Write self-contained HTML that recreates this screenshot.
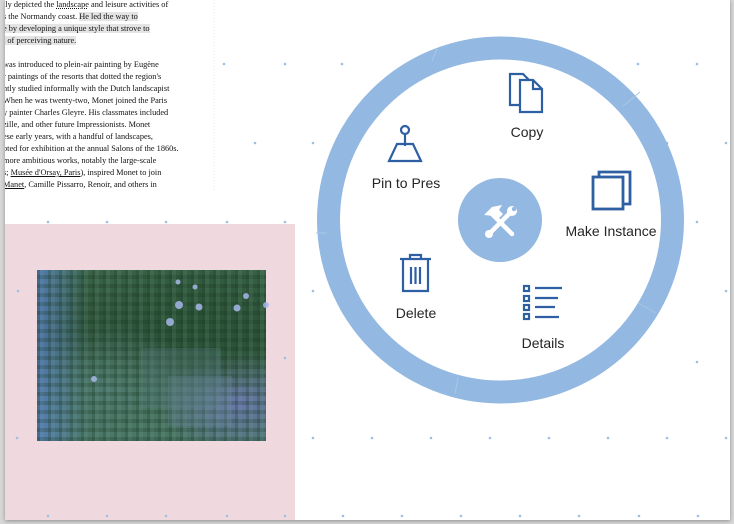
<!DOCTYPE html>
<html><head><meta charset="utf-8"><style>
html,body{margin:0;padding:0;width:734px;height:524px;overflow:hidden;background:#d8d8d8;}
#page{position:absolute;left:5px;top:0;width:725px;height:520px;background:#fff;box-shadow:0 1px 4px rgba(0,0,0,.35);}
#txt{position:absolute;left:5px;top:0;width:200px;font-family:"Liberation Serif",serif;font-size:8.3px;color:#111;line-height:12px;white-space:nowrap;overflow:hidden;}
#txt div{height:12px;margin-left:-2px}
.hl{background:#e4e4e4}
#pink{position:absolute;left:5px;top:224px;width:290px;height:296px;background:#efd9de;}
#paint{position:absolute;left:37px;top:270px;width:229px;height:171px;overflow:hidden;
background:
repeating-linear-gradient(90deg,rgba(30,60,40,.25) 0 3px,rgba(120,160,140,.15) 3px 7px,rgba(0,0,0,0) 7px 11px),
repeating-linear-gradient(0deg,rgba(20,50,30,.25) 0 4px,rgba(0,0,0,0) 4px 9px),
linear-gradient(90deg,rgba(90,130,210,.75) 0,rgba(90,130,200,.45) 10%,rgba(0,0,0,0) 22%),
radial-gradient(ellipse at 30% 70%,#4e7a70,transparent 40%),
radial-gradient(ellipse at 70% 30%,#2a5236,transparent 45%),
radial-gradient(ellipse at 88% 78%,#6a78b0,transparent 28%),
linear-gradient(#3a6448,#2d5238 40%,#40694c 70%,#4a7868);}
svg{position:absolute;left:0;top:0}
.lbl{font-family:"Liberation Sans",sans-serif;font-size:14px;fill:#252525;text-anchor:middle}
</style></head><body>
<div id="page"></div>
<div id="txt">
<div style="margin-top:-1px">tly depicted the <u style="text-decoration-style:dotted">landscape</u> and leisure activities of</div>
<div>s the Normandy coast. <span class="hl">He led the way to</span></div>
<div><span class="hl">e by developing a unique style that strove to</span></div>
<div><span class="hl">t of perceiving nature.</span></div>
<div></div>
<div>was introduced to plein-air painting by Eugène</div>
<div>r paintings of the resorts that dotted the region's</div>
<div>ntly studied informally with the Dutch landscapist</div>
<div>When he was twenty-two, Monet joined the Paris</div>
<div>y painter Charles Gleyre. His classmates included</div>
<div>zille, and other future Impressionists. Monet</div>
<div>ese early years, with a handful of landscapes,</div>
<div>pted for exhibition at the annual Salons of the 1860s.</div>
<div>more ambitious works, notably the large-scale</div>
<div>s; <u>Musée d'Orsay, Paris</u>), inspired Monet to join</div>
<div><u>Manet</u>, Camille Pissarro, Renoir, and others in</div>
</div>
<div id="pink"></div>
<div id="paint"></div>
<svg width="734" height="524" viewBox="0 0 734 524">
<line x1="214" y1="0" x2="214" y2="190" stroke="#e8e8e8" stroke-dasharray="1 2"/>
<g fill="#9cc0e3">
<circle cx="224" cy="64" r="1.3"/><circle cx="285" cy="64" r="1.3"/><circle cx="342" cy="64" r="1.3"/><circle cx="638" cy="64" r="1.3"/><circle cx="697" cy="64" r="1.3"/>
<circle cx="255" cy="143" r="1.3"/><circle cx="313" cy="143" r="1.3"/><circle cx="667" cy="143" r="1.3"/><circle cx="726" cy="143" r="1.3"/>
<circle cx="48" cy="222" r="1.3"/><circle cx="107" cy="222" r="1.3"/><circle cx="166" cy="222" r="1.3"/><circle cx="227" cy="222" r="1.3"/><circle cx="285" cy="222" r="1.3"/><circle cx="697" cy="222" r="1.3"/>
<circle cx="18" cy="291" r="1.3"/><circle cx="313" cy="291" r="1.3"/><circle cx="726" cy="291" r="1.3"/>
<circle cx="285" cy="358" r="1.3"/><circle cx="697" cy="362" r="1.3"/>
<circle cx="17" cy="438" r="1.3"/><circle cx="313" cy="438" r="1.3"/><circle cx="372" cy="438" r="1.3"/><circle cx="431" cy="438" r="1.3"/><circle cx="490" cy="438" r="1.3"/><circle cx="549" cy="438" r="1.3"/><circle cx="608" cy="438" r="1.3"/><circle cx="667" cy="438" r="1.3"/><circle cx="726" cy="438" r="1.3"/>
<circle cx="48" cy="516" r="1.3"/><circle cx="107" cy="516" r="1.3"/><circle cx="166" cy="516" r="1.3"/><circle cx="227" cy="516" r="1.3"/><circle cx="285" cy="516" r="1.3"/><circle cx="343" cy="516" r="1.3"/><circle cx="402" cy="516" r="1.3"/><circle cx="461" cy="516" r="1.3"/><circle cx="520" cy="516" r="1.3"/><circle cx="579" cy="516" r="1.3"/><circle cx="639" cy="516" r="1.3"/><circle cx="698" cy="516" r="1.3"/>
</g>
<g fill="#a8b8ea" opacity=".85">
<circle cx="170" cy="322" r="4"/><circle cx="179" cy="305" r="4"/><circle cx="199" cy="307" r="3.5"/><circle cx="237" cy="308" r="3.5"/><circle cx="266" cy="305" r="3"/><circle cx="246" cy="296" r="3"/><circle cx="195" cy="287" r="2.5"/><circle cx="178" cy="282" r="2.5"/><circle cx="94" cy="379" r="3"/>
</g>
<rect x="141" y="348" width="80" height="60" fill="#5a7d86" opacity=".3"/>
<rect x="168" y="376" width="64" height="50" fill="#6a8aa0" opacity=".25"/>
<circle cx="500.5" cy="220" r="172" fill="#fff" stroke="#93b8e1" stroke-width="23"/>
<g stroke="#a9c7e8" stroke-width="1">
<line x1="432" y1="61" x2="437" y2="49"/><line x1="623" y1="106" x2="640" y2="92"/><line x1="327" y1="233" x2="316" y2="233"/><line x1="638" y1="303" x2="656" y2="313"/><line x1="458" y1="377" x2="455" y2="394"/>
</g>
<circle cx="500" cy="220" r="42" fill="#93b8e1"/>
<g stroke="#fff" stroke-width="4.5" stroke-linecap="round" fill="none">
<line x1="491" y1="213" x2="512" y2="234"/>
<line x1="510" y1="213" x2="490" y2="233"/>
</g>
<path d="M484 215 l8 -8 l10 -2 l-3 5 l4 4 l-5 5 l-4 -3 z" fill="#fff"/>
<circle cx="512" cy="211" r="5" fill="#fff"/><circle cx="514" cy="209" r="2.2" fill="#93b8e1"/>
<circle cx="489" cy="234" r="4" fill="#fff"/>
<g stroke="#2e5fa3" stroke-width="2.2" fill="none" stroke-linejoin="miter">
<path d="M519 105 h-9 v-31 h13 l6 6"/>
<path d="M520 80 h13 l9 9 v23 h-22 z M533 80 v9 h9"/>
<circle cx="405" cy="130" r="4"/><path d="M405 134 v12 M397 144 h16 l8 17 h-32 z"/>
</g>
<g stroke="#2e5fa3" stroke-width="2.8" fill="none">
<path d="M599 177 v-5 h31 v32 h-7"/>
<rect x="593" y="177" width="30" height="32"/>
</g>
<g stroke="#2e5fa3" stroke-width="2.2" fill="none">
<path d="M400 259 h31 M410 259 v-4 h11 v4 M403 260 v31 h25 v-31 M411 267 v17 M415.5 267 v17 M420 267 v17"/>
<rect x="524" y="286" width="5" height="5"/><rect x="524" y="296" width="5" height="5"/><rect x="524" y="305" width="5" height="5"/><rect x="524" y="314" width="5" height="5"/>
<path d="M535 288 h27 M535 298 h23 M535 307 h20 M535 317 h24"/>
</g>
<text class="lbl" x="527" y="137">Copy</text>
<text class="lbl" x="406" y="188">Pin to Pres</text>
<text class="lbl" x="611" y="236">Make Instance</text>
<text class="lbl" x="416" y="318">Delete</text>
<text class="lbl" x="543" y="348">Details</text>
</svg>
</body></html>
